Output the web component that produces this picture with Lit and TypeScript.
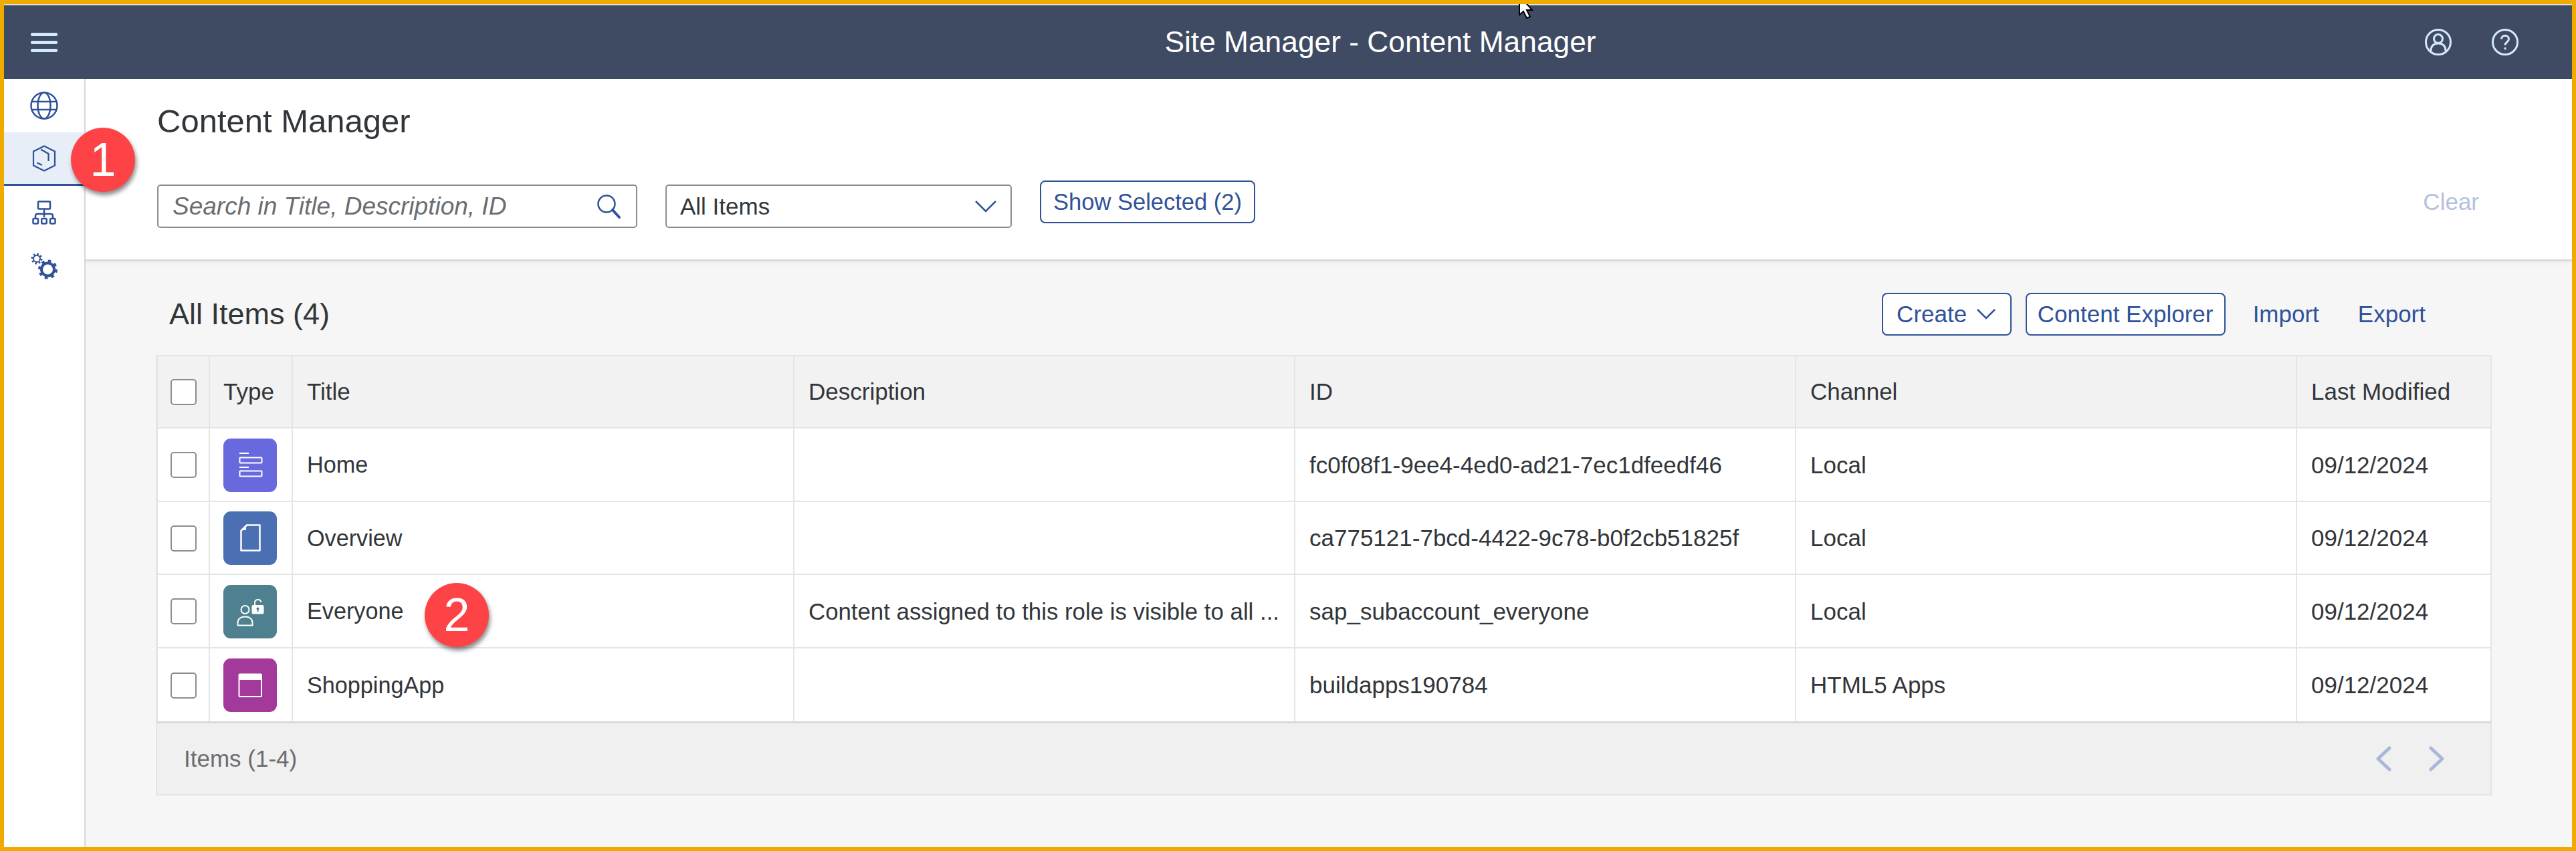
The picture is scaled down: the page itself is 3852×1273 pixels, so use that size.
import { LitElement, html, css, svg } from 'lit';
import { customElement } from 'lit/decorators.js';

type Row = {
  color: string;
  icon: unknown;
  title: string;
  description: string;
  id: string;
  channel: string;
  modified: string;
};

const homeIcon = svg`
  <path d="M24 22h14M24 43h14" stroke="#fff" stroke-width="2" fill="none"/>
  <rect x="24.5" y="28.5" width="33" height="8" rx="1" stroke="#fff" stroke-width="2" fill="none"/>
  <rect x="24.5" y="48.5" width="33" height="8" rx="1" stroke="#fff" stroke-width="2" fill="none"/>`;

const pageIcon = svg`
  <path d="M35 20.500h19.500v38h-28v-29.500z" stroke="#fff" stroke-width="2.500" fill="none" stroke-linejoin="round"/>
  <path d="M27 28l7-7v7z" fill="#fff"/>`;

const roleIcon = svg`
  <circle cx="32.500" cy="37" r="6" stroke="#fff" stroke-width="2" fill="none"/>
  <path d="M21.500 60.500v-4c0-6 5-9 11-9s11 3 11 9v4z" stroke="#fff" stroke-width="2" fill="none"/>
  <rect x="42.500" y="30" width="18" height="13.500" rx="2" fill="#fff"/>
  <path d="M47 30v-3.500c0-6 9-6 9.500-.5" stroke="#fff" stroke-width="2" fill="none"/>
  <circle cx="51.500" cy="35.500" r="2" fill="#4f808f"/>
  <rect x="50.500" y="35.500" width="2" height="4.500" fill="#4f808f"/>`;

const appIcon = svg`
  <rect x="23.500" y="23.500" width="33.500" height="33.500" rx="1" stroke="#fff" stroke-width="2" fill="none"/>
  <rect x="23.500" y="23.500" width="33.500" height="8.500" fill="#fff"/>`;

const ROWS: Row[] = [
  {
    color: '#6969de',
    icon: homeIcon,
    title: 'Home',
    description: '',
    id: 'fc0f08f1-9ee4-4ed0-ad21-7ec1dfeedf46',
    channel: 'Local',
    modified: '09/12/2024',
  },
  {
    color: '#4a6fb2',
    icon: pageIcon,
    title: 'Overview',
    description: '',
    id: 'ca775121-7bcd-4422-9c78-b0f2cb51825f',
    channel: 'Local',
    modified: '09/12/2024',
  },
  {
    color: '#4f808f',
    icon: roleIcon,
    title: 'Everyone',
    description: 'Content assigned to this role is visible to all ...',
    id: 'sap_subaccount_everyone',
    channel: 'Local',
    modified: '09/12/2024',
  },
  {
    color: '#a3399a',
    icon: appIcon,
    title: 'ShoppingApp',
    description: '',
    id: 'buildapps190784',
    channel: 'HTML5 Apps',
    modified: '09/12/2024',
  },
];

@customElement('app-root')
export class AppRoot extends LitElement {
  static override styles = css`
    :host {
      display: block;
      position: relative;
      width: 3852px;
      height: 1273px;
      box-sizing: border-box;
      border: 6px solid #f0ab00;
      font-family: "Liberation Sans", Arial, sans-serif;
      font-size: 35px;
      color: #32363a;
      background: #fff;
      overflow: hidden;
    }

    .app {
      display: flex;
      flex-direction: column;
      height: 100%;
    }

    .shell {
      flex: none;
      height: 110px;
      border-top: 2px solid #e0e0e0;
      background: #3f4b62;
      display: flex;
      align-items: center;
      color: #fff;
    }

    .burger {
      margin-left: 40px;
      width: 40px;
      display: flex;
      flex-direction: column;
      gap: 7px;
    }

    .burger span {
      height: 5px;
      border-radius: 2px;
      background: #d1e8ff;
    }

    .shell-title {
      flex: 1;
      text-align: center;
      font-size: 44.300px;
      padding-left: 416px;
    }

    .shell-icons {
      display: flex;
      gap: 60px;
      margin-right: 80px;
    }

    .shell-icons svg {
      display: block;
    }

    .main {
      flex: 1;
      display: flex;
      min-height: 0;
    }

    .side {
      flex: none;
      width: 120px;
      border-right: 2px solid #d9d9d9;
      display: flex;
      flex-direction: column;
    }

    .side-item {
      height: 80px;
      box-sizing: border-box;
      display: flex;
      align-items: center;
      justify-content: center;
    }

    .side-item.active {
      background: #e7eef8;
      border-bottom: 3px solid #2f5299;
    }

    .content {
      flex: 1;
      display: flex;
      flex-direction: column;
      min-width: 0;
    }

    .top {
      flex: none;
      height: 273px;
      box-sizing: border-box;
      border-bottom: 3px solid #d9d9d9;
      padding: 35px 139px 0 107px;
      box-shadow: 0 3px 6px rgba(0, 0, 0, 0.03);
      position: relative;
    }

    h1 {
      margin: 0;
      font-size: 49px;
      font-weight: 400;
      line-height: 56px;
    }

    .filters {
      margin-top: 61px;
      display: flex;
      align-items: flex-start;
    }

    .field {
      box-sizing: border-box;
      height: 65px;
      margin-top: 6px;
      border: 2px solid #8a8d95;
      border-radius: 5px;
      display: flex;
      align-items: center;
      justify-content: space-between;
    }

    .search {
      width: 718px;
      padding: 0 21px 0 21px;
      font-style: italic;
      font-size: 37px;
      color: #6a6d70;
    }

    .select {
      width: 518px;
      margin-left: 42px;
      padding: 0 20px 0 20px;
    }

    .btn {
      box-sizing: border-box;
      height: 64px;
      border: 2.500px solid #2f5299;
      border-radius: 8px;
      color: #2f5299;
      background: #fff;
      display: flex;
      align-items: center;
      justify-content: center;
      gap: 14px;
    }

    .show-selected {
      width: 322px;
      margin-left: 42px;
      font-size: 34.500px;
    }

    .clear {
      margin-left: auto;
      line-height: 64px;
      color: #b4c1df;
    }

    .body {
      flex: 1;
      background: #f6f6f6;
      padding: 0 120px 0 105px;
    }

    .list-head {
      display: flex;
      align-items: center;
      height: 64px;
      padding: 47px 99px 29px 20px;
    }

    .list-title {
      font-size: 45px;
      flex: 1;
    }

    .create {
      width: 194px;
    }

    .explorer {
      width: 299px;
      margin-left: 21px;
    }

    .link {
      color: #2f5299;
    }

    .import {
      margin-left: 41px;
    }

    .export {
      margin-left: 58px;
    }

    .table {
      border: solid #e5e5e5;
      border-width: 2px 2px 0 3px;
    }

    .row {
      display: grid;
      grid-template-columns: 78px 124px 750px 749px 749px 749px 1fr;
      height: 109.500px;
      box-sizing: border-box;
      border-bottom: 2px solid #e5e5e5;
      background: #fff;
    }

    .row.head {
      height: 108px;
      background: #f2f2f2;
    }

    .row.last {
      border-bottom: 0;
    }

    .cell {
      display: flex;
      align-items: center;
      box-sizing: border-box;
      padding: 0 21px;
      border-right: 2px solid #e5e5e5;
      min-width: 0;
    }

    .row:not(.head) .cell {
      padding-top: 2px;
    }

    .cell:last-child {
      border-right: 0;
    }

    .cell.check {
      padding-left: 19px;
      padding-right: 0;
    }

    .cell.type {
      padding-left: 20px;
      padding-right: 0;
    }

    .row:not(.head) .cell.name {
      font-size: 34.200px;
    }

    .row:not(.head) .cell.desc {
      font-size: 34.800px;
    }

    .cell span {
      white-space: nowrap;
    }

    .box {
      width: 39px;
      height: 39px;
      box-sizing: border-box;
      border: 2px solid #8a8d95;
      border-radius: 5px;
      background: #fff;
    }

    .tile {
      width: 80px;
      height: 80px;
      border-radius: 11px;
      display: block;
    }

    .foot {
      height: 111px;
      box-sizing: border-box;
      background: #f0f0f0;
      border: solid #e5e5e5;
      border-width: 3px 2px 2px 2px;
      border-top-color: #d9d9d9;
      display: flex;
      align-items: center;
      justify-content: space-between;
      padding: 0 68px 0 40px;
      color: #6a6d70;
    }

    .pager {
      display: flex;
      gap: 56px;
    }

    .badge {
      position: absolute;
      width: 96px;
      height: 96px;
      border-radius: 50%;
      background: #fd4345;
      color: #fff;
      font-size: 70px;
      line-height: 96px;
      text-align: center;
      box-shadow: 2px 5px 6px rgba(0, 0, 0, 0.45);
    }

    .badge-one {
      left: 100px;
      top: 185px;
    }

    .badge-two {
      left: 629px;
      top: 866px;
    }

    .cursor-bar {
      position: absolute;
      left: 2264px;
      top: -6px;
      width: 64px;
      height: 6px;
      background: #000;
    }

    .cursor {
      position: absolute;
      left: 2264px;
      top: -6px;
    }
  `;

  private _globe() {
    return html`<svg width="42" height="42" viewBox="0 0 42 42" fill="none" stroke="#2f5299" stroke-width="2.500">
      <circle cx="21" cy="21" r="19.500"/>
      <ellipse cx="21" cy="21" rx="9.500" ry="19.500"/>
      <path d="M3 15h36M3 27h36"/>
    </svg>`;
  }

  private _box() {
    return html`<svg width="36" height="40" viewBox="0 0 36 40" fill="none" stroke="#2f5299" stroke-width="2.200">
      <path d="M18 1.500l16 8v21l-16 8-16-8v-21z"/>
      <path d="M13 6.500l11.500 6.500v11"/>
      <path d="M7.500 26.500l7.500 3.500"/>
    </svg>`;
  }

  private _tree() {
    return html`<svg width="36" height="36" viewBox="0 0 36 36" fill="none" stroke="#2f5299" stroke-width="2.500">
      <rect x="9" y="1.500" width="18" height="11" rx="1"/>
      <path d="M18 13v12M5 26v-3c0-2 1-3 3-3h20c2 0 3 1 3 3v3"/>
      <rect x="1.500" y="27" width="7.500" height="7.500" rx="1.500"/>
      <rect x="14.200" y="27" width="7.500" height="7.500" rx="1.500"/>
      <rect x="27" y="27" width="7.500" height="7.500" rx="1.500"/>
    </svg>`;
  }

  private _gears() {
    return html`<svg width="42" height="40" viewBox="0 0 42 40" fill="none" stroke="#2f5299">
      <circle cx="10" cy="9" r="5" stroke-width="2"/>
      <circle cx="10" cy="9" r="7" stroke-width="3" stroke-dasharray="2.500 3"/>
      <circle cx="26.500" cy="25" r="9.500" stroke-width="4"/>
      <circle cx="26.500" cy="25" r="12.500" stroke-width="4" stroke-dasharray="4.500 5.300"/>
    </svg>`;
  }

  private _row(r: Row, last: boolean) {
    return html`<div class="row ${last ? 'last' : ''}">
      <div class="cell check"><div class="box"></div></div>
      <div class="cell type">
        <svg class="tile" width="80" height="80" viewBox="0 0 80 80" style="background:${r.color}">${r.icon}</svg>
      </div>
      <div class="cell name"><span>${r.title}</span></div>
      <div class="cell desc"><span>${r.description}</span></div>
      <div class="cell"><span>${r.id}</span></div>
      <div class="cell"><span>${r.channel}</span></div>
      <div class="cell"><span>${r.modified}</span></div>
    </div>`;
  }

  override render() {
    return html`
      <div class="app">
        <div class="shell">
          <div class="burger"><span></span><span></span><span></span></div>
          <div class="shell-title">Site Manager - Content Manager</div>
          <div class="shell-icons">
            <svg width="40" height="40" viewBox="0 0 40 40" fill="none" stroke="#d1e8ff" stroke-width="3">
              <circle cx="20" cy="20" r="18.500"/>
              <circle cx="20" cy="15" r="6.500"/>
              <path d="M9 33c0-8 5-11 11-11s11 3 11 11"/>
            </svg>
            <svg width="40" height="40" viewBox="0 0 40 40" fill="none" stroke="#d1e8ff" stroke-width="3">
              <circle cx="20" cy="20" r="18.500"/>
              <path d="M14.500 15.500c0-7 11-7 11 0 0 4.500-5.500 4.500-5.500 9"/>
              <path d="M20 28v3"/>
            </svg>
          </div>
        </div>
        <div class="main">
          <div class="side">
            <div class="side-item">${this._globe()}</div>
            <div class="side-item active">${this._box()}</div>
            <div class="side-item">${this._tree()}</div>
            <div class="side-item">${this._gears()}</div>
          </div>
          <div class="content">
            <div class="top">
              <h1>Content Manager</h1>
              <div class="filters">
                <div class="field search">
                  <span>Search in Title, Description, ID</span>
                  <svg width="38" height="38" viewBox="0 0 38 38" fill="none" stroke="#2f5299" stroke-width="2.500">
                    <circle cx="15" cy="15" r="12.500"/>
                    <path d="M24 24l10 11" stroke-width="4" stroke-linecap="round"/>
                  </svg>
                </div>
                <div class="field select">
                  <span>All Items</span>
                  <svg width="34" height="20" viewBox="0 0 34 20" fill="none" stroke="#2f5299" stroke-width="2.500">
                    <path d="M2 2l15 15 15-15"/>
                  </svg>
                </div>
                <div class="btn show-selected">Show Selected (2)</div>
                <div class="clear">Clear</div>
              </div>
            </div>
            <div class="body">
              <div class="list-head">
                <div class="list-title">All Items (4)</div>
                <div class="btn create">
                  <span>Create</span>
                  <svg width="30" height="18" viewBox="0 0 30 18" fill="none" stroke="#2f5299" stroke-width="2.500">
                    <path d="M2 2l13 13 13-13"/>
                  </svg>
                </div>
                <div class="btn explorer">Content Explorer</div>
                <div class="link import">Import</div>
                <div class="link export">Export</div>
              </div>
              <div class="table">
                <div class="row head">
                  <div class="cell check"><div class="box"></div></div>
                  <div class="cell type">Type</div>
                  <div class="cell">Title</div>
                  <div class="cell">Description</div>
                  <div class="cell">ID</div>
                  <div class="cell">Channel</div>
                  <div class="cell">Last Modified</div>
                </div>
                ${ROWS.map((r, i) => this._row(r, i === ROWS.length - 1))}
              </div>
              <div class="foot">
                <span>Items (1-4)</span>
                <div class="pager">
                  <svg width="24" height="38" viewBox="0 0 24 38" fill="none" stroke="#a9b8d8" stroke-width="5" stroke-linecap="round" stroke-linejoin="round">
                    <path d="M21 3L4 19l17 16"/>
                  </svg>
                  <svg width="24" height="38" viewBox="0 0 24 38" fill="none" stroke="#a9b8d8" stroke-width="5" stroke-linecap="round" stroke-linejoin="round">
                    <path d="M3 3l17 16L3 35"/>
                  </svg>
                </div>
              </div>
            </div>
          </div>
        </div>
      </div>
      <div class="badge badge-one">1</div>
      <div class="badge badge-two">2</div>
      <div class="cursor-bar"></div>
      <svg class="cursor" width="34" height="30" viewBox="0 0 34 30">
        <path d="M2 0v22l6-5 5 10 5-2-5-10h8L8 0z" fill="#fff" stroke="#000" stroke-width="2"/>
      </svg>
    `;
  }
}
